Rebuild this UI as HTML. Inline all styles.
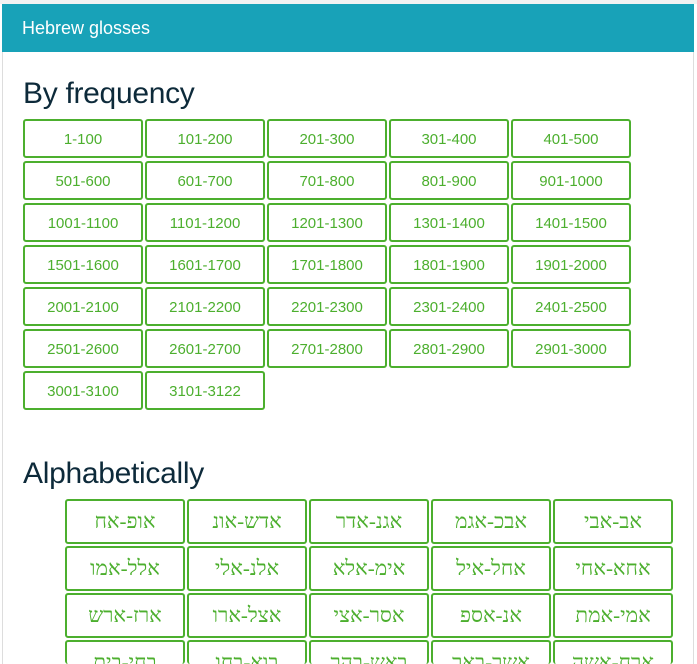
<!DOCTYPE html>
<html><head><meta charset="utf-8"><style>
html,body{margin:0;width:697px;height:664px;overflow:hidden}
body{background:#fff;font-family:"Liberation Sans",sans-serif;position:relative}
.card{position:absolute;left:2px;top:4px;width:692px;height:660px;border-left:1px solid #ddd;border-right:1px solid #ddd;box-sizing:border-box;background:#fff}
.hdr{position:absolute;left:2px;top:4px;width:692px;height:48px;background:#18a2b8;color:#fff;font-size:18px;line-height:48px;padding-left:20px;box-sizing:border-box}
.edge{position:absolute;left:0;top:0;width:697px;height:4px;background:#f2f2f2}
h2{position:absolute;left:23px;margin:0;font-weight:normal;font-size:30px;color:#0d2a3a;letter-spacing:-0.3px}
.btn{position:absolute;box-sizing:border-box;border:2px solid #4caf2e;border-radius:3px;color:#4caf2e;text-align:center;background:#fff;overflow:hidden}
.f{width:120px;height:39px;line-height:37px;font-size:15px}
.h{width:120px;height:45px;line-height:41px;font-size:21px;font-family:"Liberation Serif","DejaVu Sans",serif;direction:rtl}
</style></head><body>
<div class="edge"></div>
<div class="card"></div>
<div class="hdr">Hebrew glosses</div>
<h2 style="top:77px">By frequency</h2>
<h2 style="top:457px">Alphabetically</h2>
<div id="f" style="position:absolute;left:0;top:0;width:697px;height:664px;overflow:hidden"></div>
<script>
var labs=["1-100","101-200","201-300","301-400","401-500","501-600","601-700","701-800","801-900","901-1000"];
for(var i=1000;i<3100;i+=100)labs.push((i+1)+"-"+(i+100));
labs.push("3101-3122");
var s="";
labs.forEach(function(l,i){var c=i%5,r=Math.floor(i/5);s+='<div class="btn f" style="left:'+(23+c*122)+'px;top:'+(119+r*42)+'px">'+l+'</div>';});
var heb=["אב-אבי","אבכ-אגמ","אגנ-אדר","אדש-אונ","אופ-אח","אחא-אחי","אחל-איל","אימ-אלא","אלנ-אלי","אלל-אמו","אמי-אמת","אנ-אספ","אסר-אצי","אצל-ארו","ארז-ארש","ארח-אשה","אשר-באר","באש-בהר","בוא-בחו","בחי-בית"];
heb.forEach(function(l,i){var c=i%5,r=Math.floor(i/5);var t=499+r*47;var hh=Math.min(45,664-t);s+='<div class="btn h" style="left:'+(553-c*122)+'px;top:'+t+'px;height:'+hh+'px;border-bottom-width:'+(hh<45?0:2)+'px">'+l+'</div>';});
document.getElementById("f").innerHTML=s;
</script>
</body></html>
